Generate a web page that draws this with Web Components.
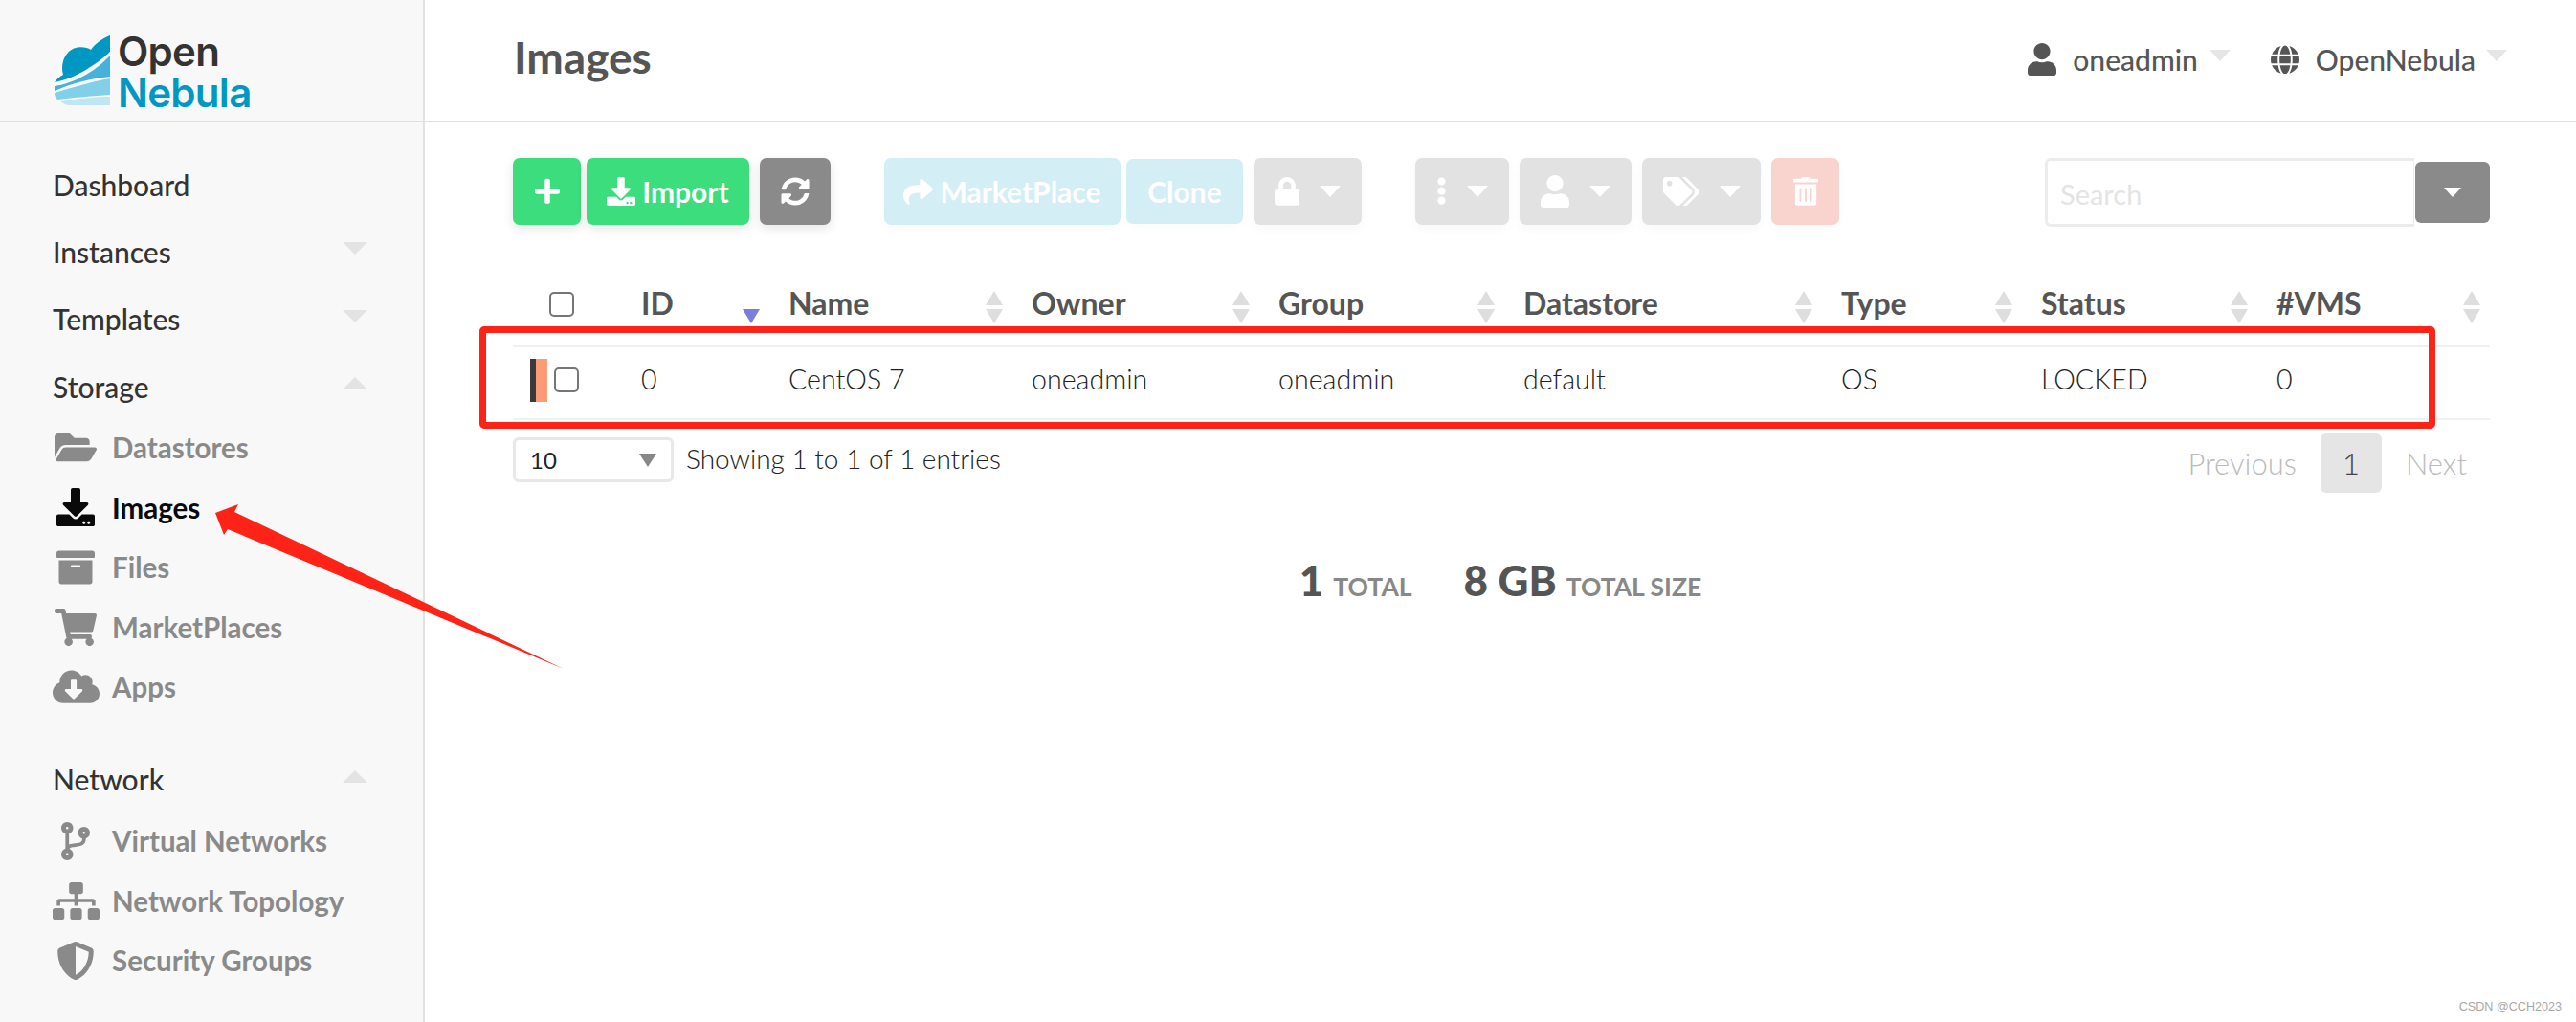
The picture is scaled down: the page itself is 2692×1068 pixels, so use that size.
<!DOCTYPE html>
<html>
<head>
<meta charset="utf-8">
<title>Images</title>
<style>
    html, body { margin: 0; height: 100%; background: #fff; overflow: hidden; }
    body { font-family: Lato, "Open Sans", sans-serif; }
</style>
</head>
<body>
<one-app>
    <side-bar slot="side">
        <nav-head>Dashboard</nav-head>
        <nav-head caret="down">Instances</nav-head>
        <nav-head caret="down">Templates</nav-head>
        <nav-head caret="up">Storage</nav-head>
        <nav-group>
            <nav-item icon="folder" size="44">Datastores</nav-item>
            <nav-item icon="download" size="40" active>Images</nav-item>
            <nav-item icon="archive" size="40">Files</nav-item>
            <nav-item icon="cart" size="44">MarketPlaces</nav-item>
            <nav-item icon="cloud" size="49">Apps</nav-item>
        </nav-group>
        <nav-head caret="up" spaced>Network</nav-head>
        <nav-group>
            <nav-item icon="branch" size="30">Virtual Networks</nav-item>
            <nav-item icon="sitemap" size="49">Network Topology</nav-item>
            <nav-item icon="shield" size="40">Security Groups</nav-item>
        </nav-group>
    </side-bar>
    <top-bar slot="main"></top-bar>
    <tool-bar slot="main"></tool-bar>
    <data-table slot="main"></data-table>
    <table-footer slot="main"></table-footer>
    <image-stats slot="main"></image-stats>
</one-app>
<red-notes></red-notes>

<script>
const ICONS = {
    folder: [576, 512, "M572.694 292.093L500.27 416.248A63.997 63.997 0 0 1 444.989 448H45.025c-18.523 0-30.064-20.093-20.731-36.093l72.424-124.155A64 64 0 0 1 152 256h399.964c18.523 0 30.064 20.093 20.73 36.093zM152 224h328v-48c0-26.51-21.49-48-48-48H272l-64-64H48C21.49 64 0 85.49 0 112v278.046l69.077-118.418C86.214 242.25 117.989 224 152 224z"],
    download: [512, 512, "M216 0h80c13.3 0 24 10.7 24 24v168h87.7c17.8 0 26.7 21.5 14.1 34.1L269.7 378.3c-7.5 7.5-19.8 7.5-27.3 0L90.1 226.1c-12.6-12.6-3.7-34.1 14.1-34.1H192V24c0-13.3 10.7-24 24-24zm296 376v112c0 13.3-10.7 24-24 24H24c-13.3 0-24-10.7-24-24V376c0-13.3 10.7-24 24-24h146.7l49 49c20.1 20.1 52.5 20.1 72.6 0l49-49H488c13.3 0 24 10.7 24 24zm-124 88c0-11-9-20-20-20s-20 9-20 20 9 20 20 20 20-9 20-20zm64 0c0-11-9-20-20-20s-20 9-20 20 9 20 20 20 20-9 20-20z"],
    archive: [512, 512, "M32 448c0 17.7 14.3 32 32 32h384c17.7 0 32-14.3 32-32V160H32v288zm160-212c0-6.6 5.4-12 12-12h104c6.6 0 12 5.4 12 12v8c0 6.6-5.4 12-12 12H204c-6.6 0-12-5.4-12-12v-8zM480 32H32C14.3 32 0 46.3 0 64v48c0 8.8 7.2 16 16 16h480c8.8 0 16-7.2 16-16V64c0-17.7-14.3-32-32-32z"],
    cart: [576, 512, "M528.12 301.319l47.273-208C578.806 78.301 567.391 64 551.99 64H159.208l-9.166-44.81C147.758 8.021 137.93 0 126.529 0H24C10.745 0 0 10.745 0 24v16c0 13.255 10.745 24 24 24h69.883l70.248 343.435C147.325 417.1 136 435.222 136 456c0 30.928 25.072 56 56 56s56-25.072 56-56c0-15.674-6.447-29.835-16.824-40h209.647C430.447 426.165 424 440.326 424 456c0 30.928 25.072 56 56 56s56-25.072 56-56c0-22.172-12.888-41.332-31.579-50.405l5.517-24.276c3.413-15.018-8.002-29.319-23.403-29.319H218.117l-6.545-32h293.145c11.206 0 20.92-7.754 23.403-18.681z"],
    cloud: [640, 512, "M537.6 226.6c4.1-10.7 6.4-22.4 6.4-34.6 0-53-43-96-96-96-19.7 0-38.1 6-53.3 16.2C367 64.2 315.3 32 256 32c-88.4 0-160 71.6-160 160 0 2.7.1 5.4.2 8.1C40.2 219.8 0 273.2 0 336c0 79.5 64.5 144 144 144h368c70.7 0 128-57.3 128-128 0-61.9-44-113.6-102.4-125.4zm-132.9 88.7L299.3 420.7c-6.2 6.2-16.4 6.2-22.6 0L171.3 315.3c-10.1-10.1-2.9-27.3 11.3-27.3H248V176c0-8.8 7.2-16 16-16h48c8.8 0 16 7.2 16 16v112h65.4c14.2 0 21.4 17.2 11.3 27.3z"],
    branch: [384, 512, "M384 144c0-44.2-35.8-80-80-80s-80 35.8-80 80c0 36.4 24.3 67.1 57.5 76.8-.6 16.1-4.2 28.5-11 36.9-15.4 19.2-49.3 22.4-85.2 25.7-28.2 2.6-57.4 5.4-81.3 16.9v-144c32.5-10.2 56-40.5 56-76.3 0-44.2-35.8-80-80-80S0 35.8 0 80c0 35.8 23.5 66.1 56 76.3v199.3C23.5 365.9 0 396.2 0 432c0 44.2 35.8 80 80 80s80-35.8 80-80c0-34-21.2-63.1-51.2-74.6 3.1-5.2 7.8-9.8 14.9-13.4 16.2-8.2 40.4-10.4 66.1-12.8 42.2-3.9 90-8.4 118.2-43.4 14-17.4 21.1-39.8 21.6-67.9 31.6-10.8 54.4-40.7 54.4-75.9zM80 64c8.8 0 16 7.2 16 16s-7.2 16-16 16-16-7.2-16-16 7.2-16 16-16zm0 384c-8.8 0-16-7.2-16-16s7.2-16 16-16 16 7.2 16 16-7.2 16-16 16zm224-320c8.8 0 16 7.2 16 16s-7.2 16-16 16-16-7.2-16-16 7.2-16 16-16z"],
    sitemap: [640, 512, "M128 352H32c-17.67 0-32 14.33-32 32v96c0 17.67 14.33 32 32 32h96c17.67 0 32-14.33 32-32v-96c0-17.67-14.33-32-32-32zm-24-80h192v48h48v-48h192v48h48v-57.59c0-21.17-17.23-38.41-38.41-38.41H344v-64h40c17.67 0 32-14.33 32-32V32c0-17.67-14.33-32-32-32H256c-17.67 0-32 14.33-32 32v96c0 17.67 14.33 32 32 32h40v64H94.41C73.23 224 56 241.23 56 262.41V320h48v-48zm264 80h-96c-17.67 0-32 14.33-32 32v96c0 17.67 14.33 32 32 32h96c17.67 0 32-14.33 32-32v-96c0-17.67-14.33-32-32-32zm240 0h-96c-17.67 0-32 14.33-32 32v96c0 17.67 14.33 32 32 32h96c17.67 0 32-14.33 32-32v-96c0-17.67-14.33-32-32-32z"],
    shield: [512, 512, "M466.5 83.7l-192-80a48.15 48.15 0 0 0-36.9 0l-192 80C27.7 91.1 16 108.6 16 128c0 198.5 114.5 335.7 221.5 380.3 11.8 4.9 25.1 4.9 36.9 0C360.1 472.6 496 349.3 496 128c0-19.4-11.7-36.9-29.5-44.3zM256.1 446.3l-.1-381 175.9 73.3c-3.3 151.4-82.1 261.1-175.8 307.7z"],
    user: [448, 512, "M224 256c70.7 0 128-57.3 128-128S294.7 0 224 0 96 57.3 96 128s57.3 128 128 128zm89.6 32h-16.7c-22.2 10.2-46.9 16-72.9 16s-50.6-5.8-72.9-16h-16.7C60.2 288 0 348.2 0 422.4V464c0 26.5 21.5 48 48 48h352c26.5 0 48-21.5 48-48v-41.6c0-74.2-60.2-134.4-134.4-134.4z"],
    globe: [496, 512, "M336.5 160C322 70.7 287.8 8 248 8s-74 62.7-88.5 152h177zM152 256c0 22.2 1.2 43.5 3.3 64h185.3c2.1-20.5 3.3-41.8 3.3-64s-1.2-43.5-3.3-64H155.3c-2.1 20.5-3.3 41.8-3.3 64zm324.7-96c-28.6-67.9-86.5-120.4-158-141.6 24.4 33.8 41.2 84.7 50 141.6h108zM177.2 18.4C105.8 39.6 47.8 92.1 19.3 160h108c8.7-56.9 25.5-107.8 49.9-141.6zM487.4 192H372.7c2.1 21 3.3 42.5 3.3 64s-1.2 43-3.3 64h114.6c5.5-20.5 8.6-41.8 8.6-64s-3.1-43.5-8.5-64zM120 256c0-21.5 1.2-43 3.3-64H8.6C3.2 212.5 0 233.8 0 256s3.2 43.5 8.6 64h114.6c-2-21-3.2-42.5-3.2-64zm39.5 96c14.5 89.3 48.7 152 88.5 152s74-62.7 88.5-152h-177zm159.3 141.6c71.4-21.2 129.4-73.7 158-141.6h-108c-8.8 56.9-25.6 107.8-50 141.6zM19.3 352c28.6 67.9 86.5 120.4 158 141.6-24.4-33.8-41.2-84.7-50-141.6h-108z"],
    lock: [448, 512, "M400 224h-24v-72C376 68.2 307.8 0 224 0S72 68.2 72 152v72H48c-26.5 0-48 21.5-48 48v192c0 26.5 21.5 48 48 48h352c26.5 0 48-21.5 48-48V272c0-26.5-21.5-48-48-48zm-104 0H152v-72c0-39.7 32.3-72 72-72s72 32.3 72 72v72z"],
    plus: [448, 512, "M416 208H272V64c0-17.67-14.33-32-32-32h-32c-17.67 0-32 14.33-32 32v144H32c-17.67 0-32 14.33-32 32v32c0 17.67 14.33 32 32 32h144v144c0 17.67 14.33 32 32 32h32c17.67 0 32-14.33 32-32V304h144c17.67 0 32-14.33 32-32v-32c0-17.67-14.33-32-32-32z"],
    sync: [512, 512, "M370.72 133.28C339.458 104.008 298.888 87.962 255.848 88c-77.458.068-144.328 53.178-162.791 126.85-1.344 5.363-6.122 9.15-11.651 9.15H24.103c-7.498 0-13.194-6.807-11.807-14.176C33.933 94.924 134.813 8 256 8c66.448 0 126.791 26.136 171.315 68.685L463.03 40.97C478.149 25.851 504 36.559 504 57.941V192c0 13.255-10.745 24-24 24H345.941c-21.382 0-32.09-25.851-16.971-40.971l41.75-41.749zM32 296h134.059c21.382 0 32.09 25.851 16.971 40.971l-41.75 41.75c31.262 29.273 71.835 45.319 114.876 45.28 77.418-.07 144.315-53.144 162.787-126.849 1.344-5.363 6.122-9.15 11.651-9.15h57.304c7.498 0 13.194 6.807 11.807 14.176C478.067 417.076 377.187 504 256 504c-66.448 0-126.791-26.136-171.315-68.685L48.97 471.03C33.851 486.149 8 475.441 8 454.059V320c0-13.255 10.745-24 24-24z"],
    share: [512, 512, "M503.691 189.836L327.687 37.851C312.281 24.546 288 35.347 288 56.015v80.053C127.371 137.907 0 170.1 0 322.326c0 61.441 39.581 122.309 83.333 154.132 13.653 9.931 33.111-2.533 28.077-18.631C66.066 312.814 132.917 274.316 288 272.085V360c0 20.7 24.3 31.453 39.687 18.164l176.004-152c11.071-9.562 11.086-26.753 0-36.328z"],
    dots: [192, 512, "M96 184c39.8 0 72 32.2 72 72s-32.2 72-72 72-72-32.2-72-72 32.2-72 72-72zM24 80c0 39.8 32.2 72 72 72s72-32.2 72-72S135.8 8 96 8 24 40.2 24 80zm0 352c0 39.8 32.2 72 72 72s72-32.2 72-72-32.2-72-72-72-72 32.2-72 72z"],
    tags: [640, 512, "M497.941 225.941L286.059 14.059A48 48 0 0 0 252.118 0H48C21.49 0 0 21.49 0 48v204.118a48 48 0 0 0 14.059 33.941l211.882 211.882c18.744 18.745 49.136 18.746 67.882 0l204.118-204.118c18.745-18.745 18.745-49.137 0-67.882zM112 160c-26.51 0-48-21.49-48-48s21.49-48 48-48 48 21.49 48 48-21.49 48-48 48zm513.941 133.823L421.823 497.941c-18.745 18.745-49.137 18.745-67.882 0l-.36-.36L527.64 323.522c16.999-16.999 26.36-39.6 26.36-63.64s-9.362-46.641-26.36-63.64L331.397 0h48.721a48 48 0 0 1 33.941 14.059l211.882 211.882c18.745 18.745 18.745 49.137 0 67.882z"],
    trash: [448, 512, "M32 464a48 48 0 0 0 48 48h288a48 48 0 0 0 48-48V128H32zm272-256a16 16 0 0 1 32 0v224a16 16 0 0 1-32 0zm-96 0a16 16 0 0 1 32 0v224a16 16 0 0 1-32 0zm-96 0a16 16 0 0 1 32 0v224a16 16 0 0 1-32 0zM432 32H312l-9.4-18.7A24 24 0 0 0 281.1 0H166.8a23.72 23.72 0 0 0-21.4 13.3L136 32H16A16 16 0 0 0 0 48v32a16 16 0 0 0 16 16h416a16 16 0 0 0 16-16V48a16 16 0 0 0-16-16z"],
};

class OnIcon extends HTMLElement {
    connectedCallback() {
        this.attachShadow({ mode: "open" });
        const [w, h, d] = ICONS[this.getAttribute("name")];
        const size = Number(this.getAttribute("size") || 30);
        this.shadowRoot.innerHTML = `
            <style>
                :host { display: inline-flex; flex: none; line-height: 0; }
            </style>
            <svg width="${size}" height="${size * h / w}" viewBox="0 0 ${w} ${h}" fill="currentColor"><path d="${d}"/></svg>
        `;
    }
}
customElements.define("on-icon", OnIcon);

// triangle used by menus, dropdowns and the sort headers
class CaretMark extends HTMLElement {
    connectedCallback() {
        this.attachShadow({ mode: "open" });
        const w = Number(this.getAttribute("w") || 13);
        const h = Number(this.getAttribute("h") || 13);
        const up = this.getAttribute("dir") === "up";
        this.shadowRoot.innerHTML = `
            <style>
                :host {
                    display: block;
                    flex: none;
                    width: 0;
                    height: 0;
                    border-left: ${w}px solid transparent;
                    border-right: ${w}px solid transparent;
                    border-${up ? "bottom" : "top"}: ${h}px solid currentColor;
                }
            </style>
        `;
    }
}
customElements.define("caret-mark", CaretMark);

class OneApp extends HTMLElement {
    connectedCallback() {
        this.attachShadow({ mode: "open" });
        this.shadowRoot.innerHTML = `
            <style>
                :host { display: flex; height: 1068px; overflow: hidden; }
                .main { flex: 1; min-width: 0; display: flex; flex-direction: column; }
            </style>
            <slot name="side"></slot>
            <div class="main"><slot name="main"></slot></div>
        `;
    }
}
customElements.define("one-app", OneApp);

class SideBar extends HTMLElement {
    connectedCallback() {
        this.attachShadow({ mode: "open" });
        this.shadowRoot.innerHTML = `
            <style>
                :host {
                    display: block;
                    flex: none;
                    width: 442px;
                    height: 1068px;
                    background: #f8f8f8;
                    border-right: 2px solid #e1e1e1;
                }
                .logo {
                    display: flex;
                    align-items: flex-start;
                    gap: 8px;
                    height: 89px;
                    padding: 37px 0 0 57px;
                    border-bottom: 2px solid #dfdfdf;
                }
                .word { font-family: Inter, "Open Sans", sans-serif; font-weight: 600; font-size: 42px; line-height: 43px; letter-spacing: -.7px; }
                .word div:first-child { color: #333; margin-top: -5px; }
                .word div:last-child { color: #0098c3; }
                nav { padding-top: 29.5px; }
            </style>
            <div class="logo">
                <svg width="58" height="73" viewBox="0 0 58 73">
                    <path fill="#0098c3" d="M58 0C50 3 42 9 38 15C32 11 20 11 14 18C8 24 7 34 9 41C5 43 2 46 0 49C22 45 44 30 58 17Z"/>
                    <path fill="#45b3d9" d="M0 53C22 50 44 36 58 21V43C38 45 18 50 0 58Z"/>
                    <path fill="#82cfe8" d="M0 60C20 54 40 48 58 45V62C40 63 20 65 3 67C1 65 0 63 0 60Z"/>
                    <path fill="#bfe6f3" d="M6 69C25 66 42 64 58 64V73H16C12 73 9 71 6 69Z"/>
                </svg>
                <div class="word"><div>Open</div><div>Nebula</div></div>
            </div>
            <nav><slot></slot></nav>
        `;
    }
}
customElements.define("side-bar", SideBar);

class NavHead extends HTMLElement {
    connectedCallback() {
        this.attachShadow({ mode: "open" });
        const caret = this.getAttribute("caret");
        this.shadowRoot.innerHTML = `
            <style>
                :host {
                    display: flex;
                    align-items: center;
                    justify-content: space-between;
                    height: 70.3px;
                    padding: 0 58px 0 55px;
                    font-size: 30px;
                    font-weight: 500;
                    color: #333;
                }
                :host([spaced]) { margin-top: 30px; }
                caret-mark { color: #e3e3e3; margin-top: -6px; }
            </style>
            <span><slot></slot></span>
            ${caret ? `<caret-mark dir="${caret}"></caret-mark>` : ""}
        `;
    }
}
customElements.define("nav-head", NavHead);

class NavGroup extends HTMLElement {
    connectedCallback() {
        this.attachShadow({ mode: "open" });
        this.shadowRoot.innerHTML = `
            <style>
                :host { display: block; margin-top: -2px; }
            </style>
            <slot></slot>
        `;
    }
}
customElements.define("nav-group", NavGroup);

class NavItem extends HTMLElement {
    connectedCallback() {
        this.attachShadow({ mode: "open" });
        this.shadowRoot.innerHTML = `
            <style>
                :host {
                    display: flex;
                    align-items: center;
                    height: 62.5px;
                    padding-left: 54px;
                    font-size: 29.5px;
                    font-weight: 700;
                    color: #8a8a8a;
                }
                :host([active]) { color: #0a0a0a; }
                .ico { width: 50px; display: flex; justify-content: center; margin-right: 13px; }
            </style>
            <span class="ico"><on-icon name="${this.getAttribute("icon")}" size="${this.getAttribute("size")}"></on-icon></span>
            <span><slot></slot></span>
        `;
    }
}
customElements.define("nav-item", NavItem);

class TopBar extends HTMLElement {
    connectedCallback() {
        this.attachShadow({ mode: "open" });
        this.shadowRoot.innerHTML = `
            <style>
                :host {
                    display: flex;
                    align-items: center;
                    flex: none;
                    height: 126px;
                    padding: 0 72px 0 93px;
                    border-bottom: 2px solid #dfdfdf;
                    color: #555;
                }
                h1 { margin: 0; font-size: 46px; font-weight: 700; margin-bottom: 8px; }
                .menu { margin-left: auto; display: flex; align-items: center; margin-bottom: 2px; font-size: 30px; font-weight: 500; }
                .menu span { margin: 0 12px 0 17px; }
                .menu span:last-of-type { margin-right: 11px; }
                caret-mark { color: #e6e6e6; margin-top: -8px; }
                .gap { width: 42px; }
            </style>
            <h1>Images</h1>
            <div class="menu">
                <on-icon name="user" size="30"></on-icon><span>oneadmin</span><caret-mark w="11" h="12"></caret-mark>
                <div class="gap"></div>
                <on-icon name="globe" size="30"></on-icon><span>OpenNebula</span><caret-mark w="11" h="12"></caret-mark>
            </div>
        `;
    }
}
customElements.define("top-bar", TopBar);

class ToolBtn extends HTMLElement {
    connectedCallback() {
        this.attachShadow({ mode: "open" });
        const w = this.getAttribute("w");
        this.shadowRoot.innerHTML = `
            <style>
                :host {
                    display: flex;
                    align-items: center;
                    justify-content: center;
                    gap: 7px;
                    flex: none;
                    width: ${w}px;
                    height: 70px;
                    border-radius: 7px;
                    color: #fff;
                    font-size: 30px;
                    font-weight: 700;
                    box-shadow: 0 4px 12px rgba(0,0,0,.1);
                }
                :host([kind="go"]) { background: #3bdd7c; }
                :host([kind="dark"]) { background: #8a8a8a; }
                :host([kind="info"]) { background: #d4eef5; box-shadow: 0 4px 12px rgba(0,0,0,.02); }
                :host([kind="off"]) { background: #e2e2e2; box-shadow: 0 4px 12px rgba(0,0,0,.03); gap: 21px; }
                :host([kind="alert"]) { background: #f9d3ce; box-shadow: 0 4px 12px rgba(0,0,0,.02); }
            </style>
            <slot></slot>
        `;
    }
}
customElements.define("tool-btn", ToolBtn);

class ToolBar extends HTMLElement {
    connectedCallback() {
        this.attachShadow({ mode: "open" });
        this.shadowRoot.innerHTML = `
            <style>
                :host {
                    display: flex;
                    align-items: flex-start;
                    flex: none;
                    margin-top: 37px;
                    padding: 0 90px 0 92px;
                    height: 72px;
                }
                .s6 { width: 6px; flex: none; }
                .s11 { width: 11px; flex: none; }
                .s56 { width: 56px; flex: none; }
                .clone { height: 68px; margin-top: 1px; }
                .search { margin-left: auto; display: flex; align-items: center; }
                .input {
                    width: 386px;
                    height: 72px;
                    box-sizing: border-box;
                    border: 3px solid #ececec;
                    border-right-width: 1px;
                    border-radius: 6px 0 0 6px;
                    padding: 2px 13px 0;
                    display: flex;
                    align-items: center;
                    font-size: 29px;
                    color: #e4e4e4;
                }
                .drop {
                    width: 78px;
                    height: 64px;
                    margin-left: 1px;
                    border-radius: 6px;
                    background: #8a8a8a;
                    color: #fff;
                    display: flex;
                    align-items: center;
                    justify-content: center;
                }
            </style>
            <tool-btn kind="go" w="71"><on-icon name="plus" size="26"></on-icon></tool-btn>
            <div class="s6"></div>
            <tool-btn kind="go" w="170"><on-icon name="download" size="30"></on-icon>Import</tool-btn>
            <div class="s11"></div>
            <tool-btn kind="dark" w="74"><on-icon name="sync" size="30"></on-icon></tool-btn>
            <div class="s56"></div>
            <tool-btn kind="info" w="247"><on-icon name="share" size="31"></on-icon>MarketPlace</tool-btn>
            <div class="s6"></div>
            <tool-btn kind="info" w="122" class="clone">Clone</tool-btn>
            <div class="s11"></div>
            <tool-btn kind="off" w="113"><on-icon name="lock" size="26"></on-icon><caret-mark w="11" h="12"></caret-mark></tool-btn>
            <div class="s56"></div>
            <tool-btn kind="off" w="98"><on-icon name="dots" size="11"></on-icon><caret-mark w="11" h="12"></caret-mark></tool-btn>
            <div class="s11"></div>
            <tool-btn kind="off" w="117"><on-icon name="user" size="30"></on-icon><caret-mark w="11" h="12"></caret-mark></tool-btn>
            <div class="s11"></div>
            <tool-btn kind="off" w="124"><on-icon name="tags" size="38"></on-icon><caret-mark w="11" h="12"></caret-mark></tool-btn>
            <div class="s11"></div>
            <tool-btn kind="alert" w="71"><on-icon name="trash" size="26"></on-icon></tool-btn>
            <div class="search">
                <div class="input">Search</div>
                <div class="drop"><caret-mark w="9" h="10"></caret-mark></div>
            </div>
        `;
    }
}
customElements.define("tool-bar", ToolBar);

class CheckBox extends HTMLElement {
    connectedCallback() {
        this.attachShadow({ mode: "open" });
        this.shadowRoot.innerHTML = `
            <style>
                :host {
                    display: block;
                    flex: none;
                    width: 26px;
                    height: 26px;
                    box-sizing: border-box;
                    background: #fff;
                    border: 2px solid #767676;
                    border-radius: 5px;
                }
            </style>
        `;
    }
}
customElements.define("check-box", CheckBox);

class DataTable extends HTMLElement {
    connectedCallback() {
        this.attachShadow({ mode: "open" });
        const heads = ["ID", "Name", "Owner", "Group", "Datastore", "Type", "Status", "#VMS"];
        const cells = ["0", "CentOS 7", "oneadmin", "oneadmin", "default", "OS", "LOCKED", "0"];
        const headCells = heads.map((h, i) => `
            <div class="th">
                <span>${h}</span>
                <span class="sort ${i == 0 ? "on" : ""}">
                    <caret-mark dir="up" w="9" h="15"></caret-mark>
                    <caret-mark w="9" h="15"></caret-mark>
                </span>
            </div>`).join("");
        this.shadowRoot.innerHTML = `
            <style>
                :host { display: block; flex: none; margin: 38px 90px 0 92px; color: #555; }
                .row { display: grid; grid-template-columns: 134px 154px 254px 258px 256px 332px 209px 246px 223px; }
                .head { height: 86px; font-size: 32px; font-weight: 700; }
                .head > div { display: flex; align-items: center; }
                .th { justify-content: space-between; padding-right: 30px; }
                .th > span:first-child { margin-bottom: 3px; }
                .th:last-child { padding-right: 10px; }
                .c0 { padding-left: 38px; }
                .sort { display: flex; flex-direction: column; gap: 4px; color: #dedede; margin-top: 6px; }
                .sort.on caret-mark:first-child { visibility: hidden; }
                .sort.on { color: #7b7fdb; }
                .body {
                    height: 74px;
                    border-top: 2px solid #f1f1f1;
                    border-bottom: 2px solid #f1f1f1;
                    font-size: 28.6px;
                    font-weight: 300;
                    color: #222;
                }
                .body > div { display: flex; align-items: center; padding-bottom: 8px; }
                .body > .first { padding-bottom: 6px; padding-left: 18px; gap: 7px; }
                .state { width: 18px; height: 45px; box-sizing: border-box; background: #fd9b76; border-left: 6px solid #3a3a3a; }
            </style>
            <div class="row head"><div class="c0"><check-box></check-box></div>${headCells}</div>
            <div class="row body">
                <div class="first"><span class="state"></span><check-box></check-box></div>
                ${cells.map(c => `<div>${c}</div>`).join("")}
            </div>
        `;
    }
}
customElements.define("data-table", DataTable);

class TableFooter extends HTMLElement {
    connectedCallback() {
        this.attachShadow({ mode: "open" });
        this.shadowRoot.innerHTML = `
            <style>
                :host {
                    display: flex;
                    align-items: flex-start;
                    flex: none;
                    height: 62px;
                    margin: 14px 90px 0 92px;
                    font-size: 28px;
                    font-weight: 300;
                    color: #222;
                }
                .select {
                    width: 168px;
                    height: 47px;
                    margin-top: 4px;
                    box-sizing: border-box;
                    border: 3px solid #e8e8e8;
                    border-radius: 6px;
                    display: flex;
                    align-items: center;
                    justify-content: space-between;
                    padding: 0 15px;
                    font-size: 24px;
                    font-weight: 400;
                }
                .select caret-mark { color: #888; }
                .info { margin: 9px 0 0 13px; }
                .pages { margin-left: auto; display: flex; align-items: center; height: 62px; margin-right: 24px; gap: 25px; color: #bbb; font-size: 31px; }
                .cur {
                    width: 64px;
                    height: 62px;
                    border-radius: 6px;
                    background: #e5e5e5;
                    color: #444;
                    display: flex;
                    align-items: center;
                    justify-content: center;
                }
            </style>
            <div class="select"><span>10</span><caret-mark w="9" h="14"></caret-mark></div>
            <div class="info">Showing 1 to 1 of 1 entries</div>
            <div class="pages"><span>Previous</span><span class="cur">1</span><span>Next</span></div>
        `;
    }
}
customElements.define("table-footer", TableFooter);

class ImageStats extends HTMLElement {
    connectedCallback() {
        this.attachShadow({ mode: "open" });
        this.shadowRoot.innerHTML = `
            <style>
                :host {
                    display: flex;
                    justify-content: center;
                    align-items: baseline;
                    gap: 54px;
                    flex: none;
                    margin-top: 65px;
                    font-weight: 700;
                }
                b { font-size: 44px; color: #555; margin-right: 10px; }
                span { font-size: 26.5px; color: #888; text-transform: uppercase; }
            </style>
            <div><b>1</b><span>Total</span></div>
            <div><b>8 GB</b><span>Total size</span></div>
        `;
    }
}
customElements.define("image-stats", ImageStats);

// red annotations drawn over the screenshot, plus the watermark
class RedNotes extends HTMLElement {
    connectedCallback() {
        this.attachShadow({ mode: "open" });
        this.shadowRoot.innerHTML = `
            <style>
                :host { position: absolute; inset: 0; display: block; pointer-events: none; }
                .box {
                    position: absolute;
                    left: 501px;
                    top: 341px;
                    width: 2044px;
                    height: 107px;
                    box-sizing: border-box;
                    border: 7px solid #fd2417;
                    border-radius: 5px;
                }
                svg { position: absolute; left: 0; top: 0; }
                .mark {
                    position: absolute;
                    right: 15px;
                    top: 1045px;
                    font: 12.6px "Liberation Sans", sans-serif;
                    color: #a8a8a8;
                }
            </style>
            <div class="box"></div>
            <svg width="700" height="800"><polygon fill="#fd2417" points="225,536 249,527 245,535 589,699 238,553 234,559"/></svg>
            <div class="mark">CSDN @CCH2023</div>
        `;
    }
}
customElements.define("red-notes", RedNotes);
</script>
</body>
</html>
